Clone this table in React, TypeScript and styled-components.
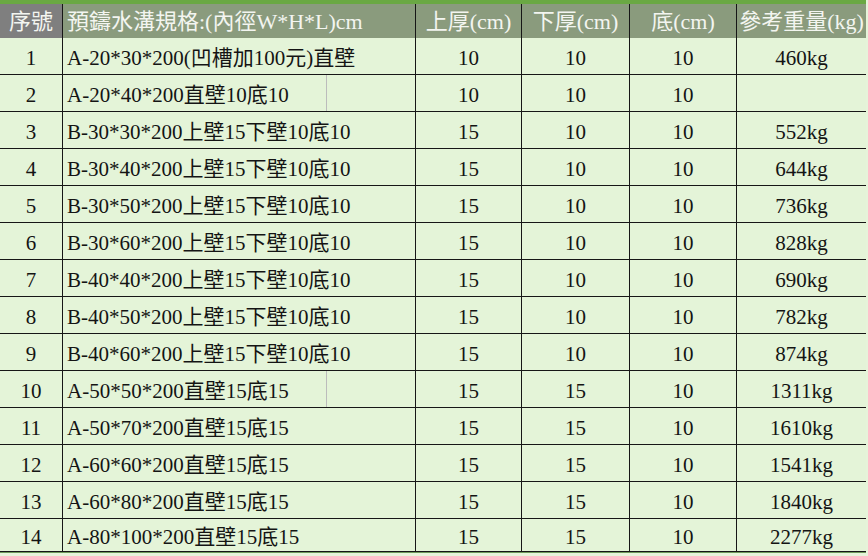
import styled, { createGlobalStyle } from 'styled-components';

const GlobalStyle = createGlobalStyle`
  html, body {
    margin: 0;
    padding: 0;
    background: #e6f4da;
  }
  body {
    font-family: "Liberation Serif", "Noto Sans CJK TC", serif;
  }
`;

const COLS = '63px 353px 106px 108px 107px 129px';

const Sheet = styled.div`
  width: 868px;
  height: 556px;
  overflow: hidden;
`;

const TopStripe = styled.div`
  width: 866px;
  height: 4px;
  background: #6aa843;
`;

const Row = styled.div<{ $head?: boolean; $last?: boolean }>`
  display: grid;
  grid-template-columns: ${COLS};
  width: 866px;
  height: ${(p) => (p.$head ? '34px' : p.$last ? '33px' : '37px')};
  background: ${(p) => (p.$head ? '#8a9b7d' : '#e4f4d8')};
  border-bottom: ${(p) => (p.$last ? '1px solid #6f9a5c' : 'none')};
`;

const Cell = styled.div<{
  $align?: 'left' | 'center';
  $head?: boolean;
  $gray?: boolean;
  $end?: boolean;
  $split?: boolean;
}>`
  position: relative;
  box-sizing: border-box;
  display: flex;
  align-items: center;
  justify-content: ${(p) => (p.$align === 'left' ? 'flex-start' : 'center')};
  padding-left: ${(p) => (p.$align === 'left' ? '4px' : '0')};
  padding-top: ${(p) => (p.$head ? '1px' : '3px')};
  border-right: ${(p) => (p.$end ? 'none' : '1px solid #161616')};
  border-bottom: ${(p) => (p.$head ? 'none' : '1px solid #161616')};
  background: ${(p) => (p.$gray ? '#7f7f7f' : 'transparent')};
  color: ${(p) => (p.$head ? '#f3f5f0' : '#141414')};
  font-size: ${(p) => (p.$head ? '22px' : '21px')};
  line-height: 24px;
  white-space: nowrap;
  overflow: hidden;

  &::after {
    content: '';
    display: ${(p) => (p.$split ? 'block' : 'none')};
    position: absolute;
    left: 263px;
    top: 0;
    bottom: 0;
    width: 1px;
    background: #bcbcbc;
  }
`;

type Item = {
  spec: string;
  top: number;
  bottom: number;
  base: number;
  weight: string;
  split?: boolean;
};

const items: Item[] = [
  { spec: 'A-20*30*200(凹槽加100元)直壁', top: 10, bottom: 10, base: 10, weight: '460kg' },
  { spec: 'A-20*40*200直壁10底10', top: 10, bottom: 10, base: 10, weight: '', split: true },
  { spec: 'B-30*30*200上壁15下壁10底10', top: 15, bottom: 10, base: 10, weight: '552kg' },
  { spec: 'B-30*40*200上壁15下壁10底10', top: 15, bottom: 10, base: 10, weight: '644kg' },
  { spec: 'B-30*50*200上壁15下壁10底10', top: 15, bottom: 10, base: 10, weight: '736kg' },
  { spec: 'B-30*60*200上壁15下壁10底10', top: 15, bottom: 10, base: 10, weight: '828kg' },
  { spec: 'B-40*40*200上壁15下壁10底10', top: 15, bottom: 10, base: 10, weight: '690kg' },
  { spec: 'B-40*50*200上壁15下壁10底10', top: 15, bottom: 10, base: 10, weight: '782kg' },
  { spec: 'B-40*60*200上壁15下壁10底10', top: 15, bottom: 10, base: 10, weight: '874kg' },
  { spec: 'A-50*50*200直壁15底15', top: 15, bottom: 15, base: 10, weight: '1311kg', split: true },
  { spec: 'A-50*70*200直壁15底15', top: 15, bottom: 15, base: 10, weight: '1610kg' },
  { spec: 'A-60*60*200直壁15底15', top: 15, bottom: 15, base: 10, weight: '1541kg' },
  { spec: 'A-60*80*200直壁15底15', top: 15, bottom: 15, base: 10, weight: '1840kg' },
  { spec: 'A-80*100*200直壁15底15', top: 15, bottom: 15, base: 10, weight: '2277kg' },
];

export default function App() {
  return (
    <Sheet>
      <GlobalStyle />
      <TopStripe />
      <Row $head>
        <Cell $head $gray>序號</Cell>
        <Cell $head $align="left">預鑄水溝規格:(內徑W*H*L)cm</Cell>
        <Cell $head>上厚(cm)</Cell>
        <Cell $head>下厚(cm)</Cell>
        <Cell $head>底(cm)</Cell>
        <Cell $head $end>參考重量(kg)</Cell>
      </Row>
      {items.map((it, i) => {
        const last = i === items.length - 1;
        return (
          <Row key={i} $last={last}>
            <Cell>{i + 1}</Cell>
            <Cell $align="left" $split={it.split}>{it.spec}</Cell>
            <Cell>{it.top}</Cell>
            <Cell>{it.bottom}</Cell>
            <Cell>{it.base}</Cell>
            <Cell $end>{it.weight}</Cell>
          </Row>
        );
      })}
    </Sheet>
  );
}
